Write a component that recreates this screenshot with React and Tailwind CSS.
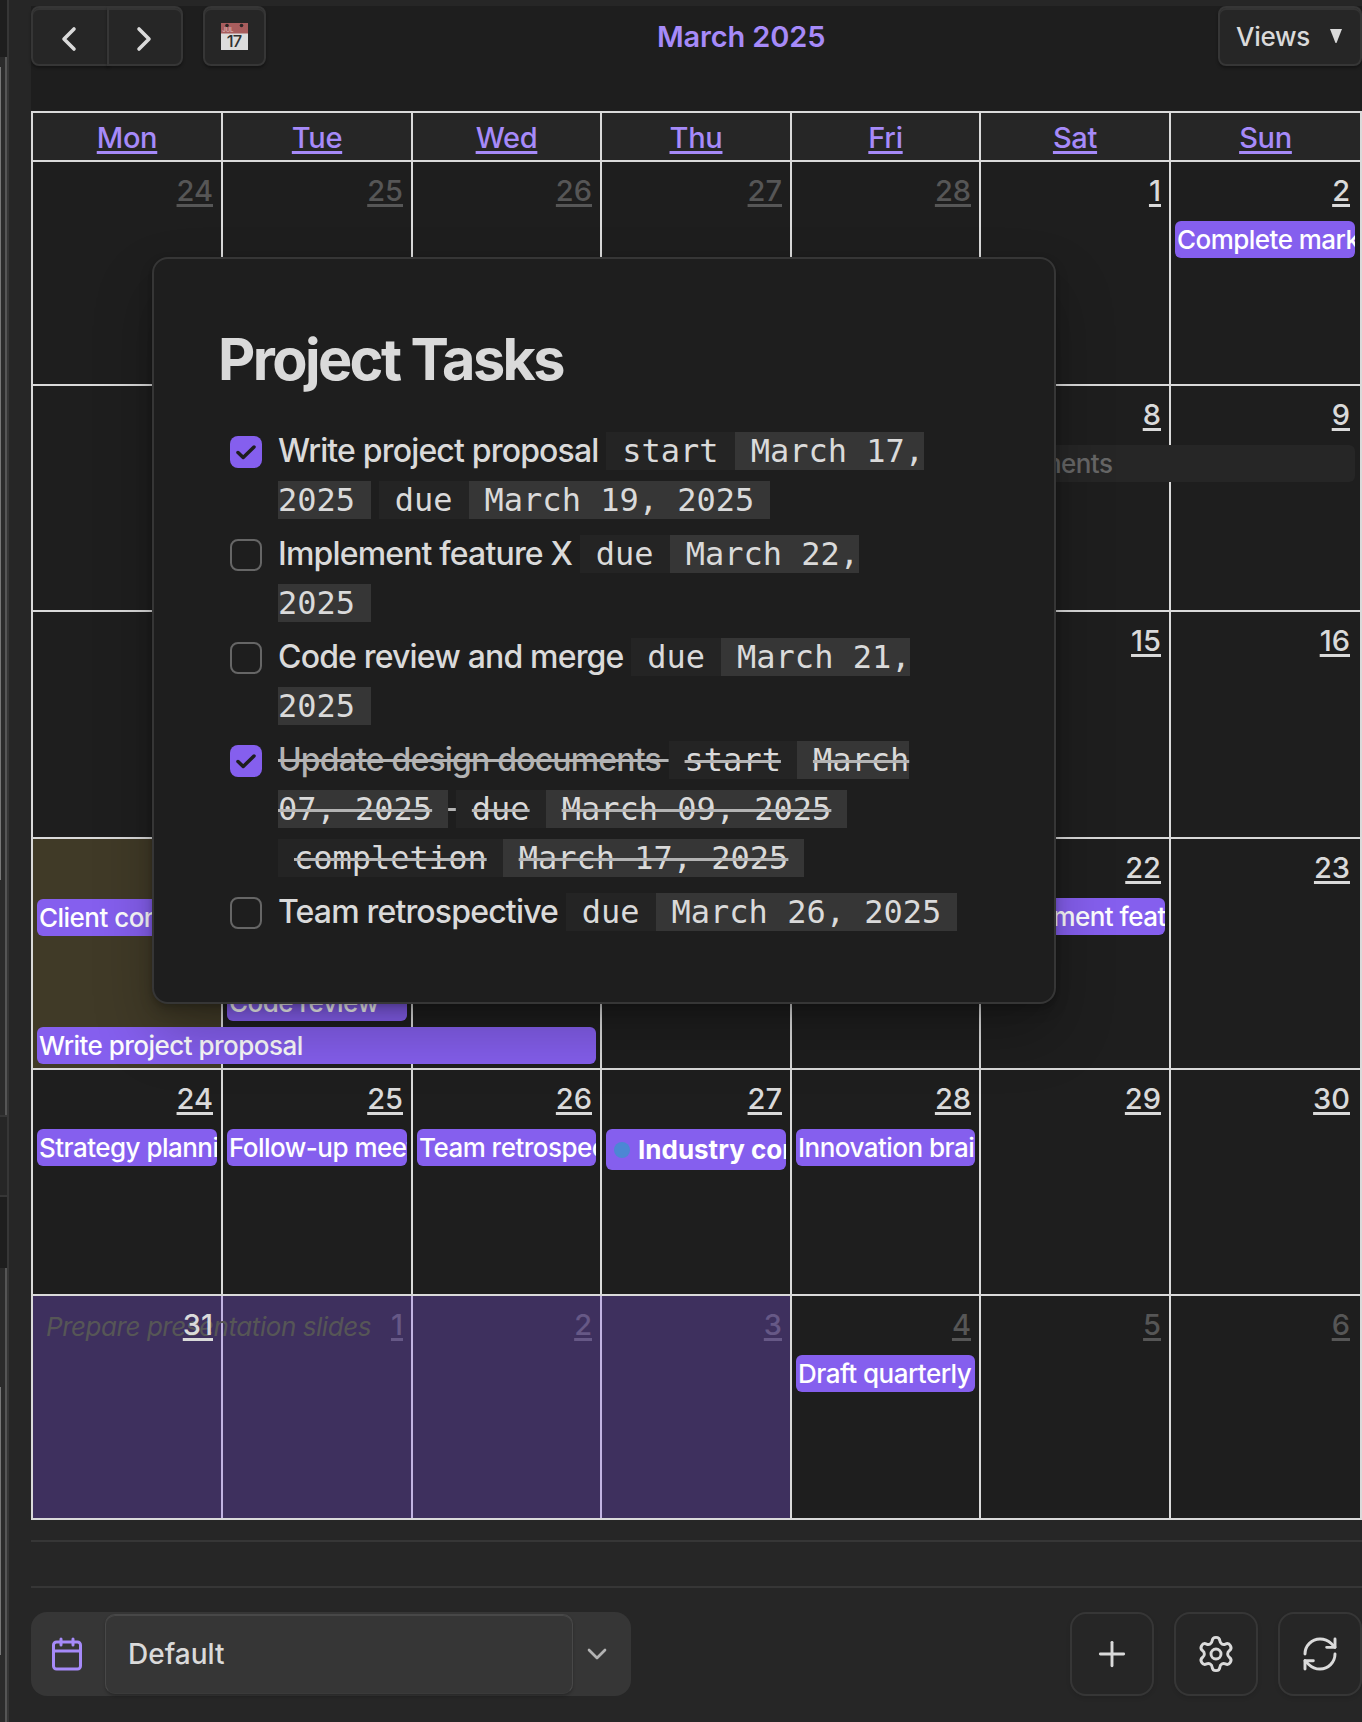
import { Calendar, ChevronDown, Plus, RefreshCw, Settings } from "lucide-react";

const DAYS = ["Mon", "Tue", "Wed", "Thu", "Fri", "Sat", "Sun"];

const WEEKS = [
  {
    height: "h-[224px]",
    days: [
      { n: 24, out: true }, { n: 25, out: true }, { n: 26, out: true }, { n: 27, out: true }, { n: 28, out: true },
      { n: 1 },
      { n: 2, events: [{ text: "Complete marketing plan" }] },
    ],
  },
  {
    height: "h-[226px]",
    days: [
      { n: 3 }, { n: 4 }, { n: 5 }, { n: 6 },
      { n: 7, events: [{ text: "Update design documents", kind: "done", place: "w-[559px]" }] },
      { n: 8 }, { n: 9 },
    ],
  },
  {
    height: "h-[227px]",
    days: [{ n: 10 }, { n: 11 }, { n: 12 }, { n: 13 }, { n: 14 }, { n: 15 }, { n: 16 }],
  },
  {
    height: "h-[231px]",
    days: [
      {
        n: 17,
        today: true,
        events: [
          { text: "Client consultation", place: "mt-px" },
          { text: "Write project proposal", place: "mt-[91px] w-[559px]" },
        ],
      },
      { n: 18, events: [{ text: "Code review", place: "mt-[86px]" }] },
      { n: 19 }, { n: 20 }, { n: 21 },
      { n: 22, events: [{ text: "Implement feature X" }] },
      { n: 23 },
    ],
  },
  {
    height: "h-[226px]",
    days: [
      { n: 24, events: [{ text: "Strategy planning" }] },
      { n: 25, events: [{ text: "Follow-up meeting" }] },
      { n: 26, events: [{ text: "Team retrospective" }] },
      { n: 27, events: [{ text: "Industry conference", kind: "dot" }] },
      { n: 28, events: [{ text: "Innovation brainstorm" }] },
      { n: 29 }, { n: 30 },
    ],
  },
  {
    height: "h-[222px]",
    last: true,
    days: [
      { n: 31, background: "Prepare presentation slides" },
      { n: 1, out: true }, { n: 2, out: true }, { n: 3, out: true },
      { n: 4, out: true, events: [{ text: "Draft quarterly report" }] },
      { n: 5, out: true }, { n: 6, out: true },
    ],
  },
];

const COLS = "grid grid-cols-[190px_190px_189px_190px_189px_190px_189px]";

function Event({ text, kind, place = "" }) {
  if (kind === "dot") {
    return (
      <div className="flex h-[41px] items-center overflow-hidden rounded-md bg-[#855fee] pl-2 text-[26px] font-bold whitespace-nowrap text-white">
        <span className="mr-2 size-4 shrink-0 rounded-full bg-[#4c87d4]" />
        {text}
      </div>
    );
  }
  const tone = kind === "done" ? "bg-[#262626] text-[#666666]" : "bg-[#855fee] text-white";
  return (
    <div className={`relative z-10 h-[37px] shrink-0 overflow-hidden rounded-md pl-[2px] text-[26px] leading-[38px] font-[450] tracking-[-0.53px] whitespace-nowrap ${tone} ${place}`}>
      {text}
    </div>
  );
}

function Day({ day, last, edge }) {
  return (
    <div
      className={`relative flex min-w-0 flex-col border-[#dadada] ${last ? "" : "border-b-2"} ${edge ? "" : "border-r-2"} ${day.today ? "bg-[#403a27]" : ""}`}
    >
      <div className={`h-[59px] pt-[9px] text-right text-[29px] leading-[40px] font-[450] ${edge ? "pr-[10px]" : "pr-2"}`}>
        <a
          className={`underline decoration-[3px] underline-offset-[3px] ${day.out ? "text-[#565656]" : "text-[#dadada]"} ${day.background ? "relative z-20" : ""}`}
        >
          {day.n}
        </a>
      </div>
      {day.background && (
        <div className="absolute top-0 left-0 z-10 h-[222px] w-[757px] bg-[#8a5cf5]/30 pt-[12px] pl-[13px] text-[26px] leading-[37px] font-[450] tracking-[-0.45px] text-[#565656] italic">
          {day.background}
        </div>
      )}
      <div className={`flex flex-col pl-1 ${edge ? "pr-[5px]" : "pr-1"}`}>
        {day.events?.map((e) => <Event key={e.text} {...e} />)}
      </div>
    </div>
  );
}

function Toolbar() {
  const button =
    "flex h-[60px] items-center border-2 border-[#363636] bg-[#262626] shadow-[inset_0_2px_0_#343434,0_2px_3px_rgba(0,0,0,0.35)]";
  return (
    <div className="flex h-[105px] items-start">
      <div className="flex">
        <button className={`${button} w-[78px] justify-center rounded-l-lg pt-[5px] pr-[2px]`}>
          <svg width="20" height="28" viewBox="0 0 20 28" fill="none" stroke="#dadada" strokeWidth="3.6" strokeLinecap="round" strokeLinejoin="round">
            <path d="M15 4 5 14l10 10" />
          </svg>
        </button>
        <button className={`${button} -ml-[2px] w-[76px] justify-center rounded-r-lg pt-[5px] pr-[2px]`}>
          <svg width="20" height="28" viewBox="0 0 20 28" fill="none" stroke="#dadada" strokeWidth="3.6" strokeLinecap="round" strokeLinejoin="round">
            <path d="m5 4 10 10L5 24" />
          </svg>
        </button>
      </div>
      <button className={`${button} ml-5 w-[63px] justify-center rounded-lg`}>
        <svg width="27" height="27" viewBox="0 0 27 27">
          <rect width="27" height="27" fill="#dcdcdc" />
          <rect width="27" height="10.5" fill="#a85d5d" />
          <circle cx="6" cy="2.5" r="1.8" fill="#2b2626" />
          <circle cx="20.5" cy="2.5" r="1.8" fill="#2b2626" />
          <text x="1.2" y="9.3" fontFamily="Inter, sans-serif" fontSize="6" fontWeight="700" fill="#d3a5a5">JUL</text>
          <text x="13" y="24.2" textAnchor="middle" fontFamily="Inter, sans-serif" fontSize="16.5" fontWeight="500" letterSpacing="-1" fill="#303030">17</text>
        </svg>
      </button>
      <h2 className="ml-[391px] pt-[11px] text-[29px] leading-[40px] font-semibold tracking-[-0.15px] text-[#a68af9]">March 2025</h2>
      <button className={`${button} ml-auto w-[144px] justify-between rounded-lg pr-[18px] pl-[16px] text-[26px] font-[450] tracking-[-0.3px] text-[#dadada]`}>
        Views
        <svg width="12" height="14" viewBox="0 0 12 14" fill="#dadada">
          <path d="M0 0h12L6.5 14h-1z" />
        </svg>
      </button>
    </div>
  );
}

function Month() {
  return (
    <div className="border-2 border-[#dadada]">
      <div className={`${COLS} h-[49px] bg-[#262626]`}>
        {DAYS.map((d, i) => (
          <div
            key={d}
            className={`border-b-2 border-[#dadada] pt-[5px] text-center text-[29px] leading-[40px] font-[450] tracking-[-0.3px] text-[#a68af9] ${i < 6 ? "border-r-2" : ""}`}
          >
            <a className="underline decoration-[3px] underline-offset-[3px]">{d}</a>
          </div>
        ))}
      </div>
      {WEEKS.map((w, i) => (
        <div key={i} className={`${COLS} ${w.height}`}>
          {w.days.map((d, j) => (
            <Day key={j} day={d} last={w.last} edge={j === 6} />
          ))}
        </div>
      ))}
    </div>
  );
}

function Key({ children }) {
  return <code className="bg-[#242424] px-4 font-['DejaVu_Sans_Mono',monospace] text-[32px] leading-none tracking-normal text-[#dadada]">{children}</code>;
}

function Value({ children }) {
  return <code className="bg-[#363636] px-4 font-['DejaVu_Sans_Mono',monospace] text-[32px] leading-none tracking-normal text-[#dadada]">{children}</code>;
}

function Task({ checked, struck, children }) {
  return (
    <li className="flex gap-4">
      <span
        className={`mt-[9.5px] flex size-8 shrink-0 items-center justify-center rounded-lg ${checked ? "bg-[#855fee]" : "border-2 border-[#666666]"}`}
      >
        {checked && (
          <svg width="22" height="18" viewBox="0 0 22 18" fill="none" stroke="#1e1e1e" strokeWidth="3.5" strokeLinecap="round" strokeLinejoin="round">
            <path d="m3 9.5 5.2 5L19 4" />
          </svg>
        )}
      </span>
      <div
        className={`w-[686px] text-[32px] leading-[49px] font-[450] tracking-[-0.83px] ${struck ? "text-[#b3b3b3] line-through decoration-[#b3b3b3] decoration-[3px]" : "text-[#dadada]"}`}
      >
        {children}
      </div>
    </li>
  );
}

function TaskPreview() {
  return (
    <section className="absolute top-[257px] left-[152px] z-30 h-[747px] w-[904px] rounded-2xl border-2 border-[#363636] bg-[#1e1e1e] pt-[65px] pl-[65px] shadow-[0_2px_4px_rgba(0,0,0,0.12),0_7px_13px_rgba(0,0,0,0.18),0_30px_60px_rgba(0,0,0,0.24)]">
      <h1 className="-ml-px text-[57.6px] leading-[70px] font-bold tracking-[-2.6px] text-[#dadada]">Project Tasks</h1>
      <ul className="mt-[32px] flex flex-col gap-[5px] pl-[11px]">
        <Task checked>
          Write project proposal <Key>start</Key><Value>March 17, 2025</Value> <Key>due</Key><Value>March 19, 2025</Value>
        </Task>
        <Task>
          Implement feature X <Key>due</Key><Value>March 22, 2025</Value>
        </Task>
        <Task>
          Code review and merge <Key>due</Key><Value>March 21, 2025</Value>
        </Task>
        <Task checked struck>
          Update design documents <Key>start</Key><Value>March 07, 2025</Value> <Key>due</Key><Value>March 09, 2025</Value>{" "}
          <Key>completion</Key><Value>March 17, 2025</Value>
        </Task>
        <Task>
          Team retrospective <Key>due</Key><Value>March 26, 2025</Value>
        </Task>
      </ul>
    </section>
  );
}

function Footer() {
  const action =
    "flex size-[84px] items-center justify-center rounded-2xl border-2 border-[#363636] text-[#dadada] shadow-[0_2px_4px_rgba(0,0,0,0.1)]";
  return (
    <footer className="mt-5 border-t-2 border-[#363636]">
      <div className="mt-11 flex items-center border-t-2 border-[#363636] pt-6">
        <div className="flex h-[84px] w-[600px] items-center rounded-2xl bg-[#363636]">
          <Calendar className="ml-[18px] shrink-0 text-[#a68af9]" size={36} strokeWidth={2} />
          <div className="ml-5 flex h-[80px] w-[468px] items-center rounded-[10px] border border-[#484848] border-b-[#3a3a3a] pl-[22px] text-[28px] font-medium text-[#dadada] shadow-[inset_0_1px_0_#484848,0_2px_3px_rgba(0,0,0,0.25)]">
            Default
          </div>
          <ChevronDown className="ml-[8px] text-[#b3b3b3]" size={32} strokeWidth={2} />
        </div>
        <div className="ml-auto flex gap-5">
          <button className={action}><Plus size={40} strokeWidth={1.75} /></button>
          <button className={action}><Settings size={40} strokeWidth={1.75} /></button>
          <button className={action}><RefreshCw size={40} strokeWidth={1.75} /></button>
        </div>
      </div>
    </footer>
  );
}

function ScrollTrack({ className, thumb }) {
  return (
    <div className={`border-r-2 border-[#555555] bg-[#2b2b2b] ${className}`}>
      <div className={`w-px bg-[#777777] ${thumb}`} />
    </div>
  );
}

function NeighbourPane() {
  return (
    <div className="flex w-[9px] shrink-0 flex-col border-r-2 border-[#363636]">
      <div className="h-[57px] bg-[#1e1e1e]" />
      <ScrollTrack className="h-[1058px] pt-[10px]" thumb="h-[813px]" />
      <div className="h-[82px] border-y-2 border-[#363636] bg-[#262626]" />
      <div className="h-[71px] bg-[#1e1e1e]" />
      <ScrollTrack className="grow pt-[119px]" thumb="h-[268px]" />
    </div>
  );
}

export default function App() {
  return (
    <div className="relative flex h-[1722px] w-[1362px] overflow-hidden bg-[#262626] font-['Inter',sans-serif]">
      <NeighbourPane />
      <main className="ml-[22px] flex w-[1331px] flex-col pt-[6px]">
        <div className="bg-[#1e1e1e]">
          <Toolbar />
          <Month />
        </div>
        <Footer />
      </main>
      <TaskPreview />
    </div>
  );
}
